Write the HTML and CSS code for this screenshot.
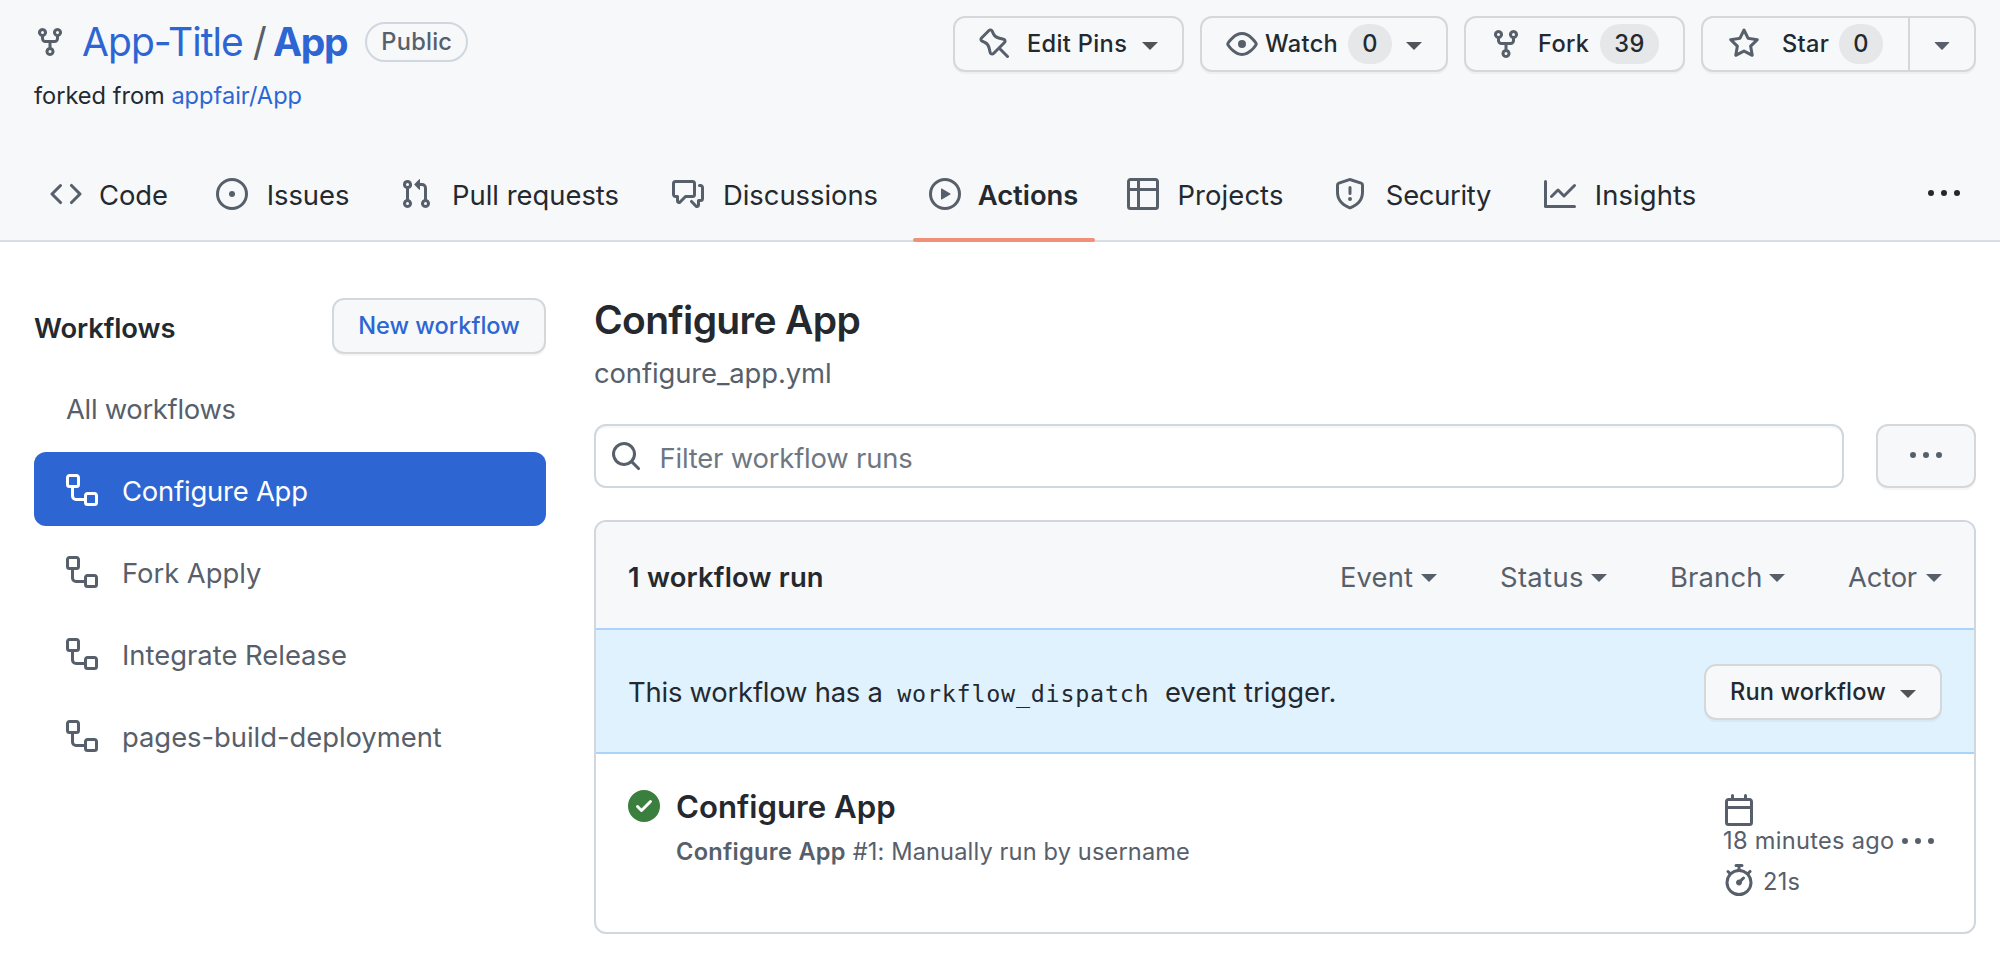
FILE: index.html
```html
<!DOCTYPE html>
<html lang="en">
<head>
<meta charset="utf-8">
<title>Configure App · Workflow runs</title>
<link rel="stylesheet" href="styles.css">
</head>
<body>
<svg class="sprite" aria-hidden="true">
  <symbol id="fork" viewBox="0 0 16 16"><path fill-rule="evenodd" d="M5 3.25a.75.75 0 11-1.5 0 .75.75 0 011.5 0zm0 2.122a2.25 2.25 0 10-1.5 0v.878A2.25 2.25 0 005.75 8.5h1.5v2.128a2.251 2.251 0 101.5 0V8.5h1.5a2.25 2.25 0 002.25-2.25v-.878a2.25 2.25 0 10-1.5 0v.878a.75.75 0 01-.75.75h-4.5A.75.75 0 015 6.25v-.878zm3.75 7.378a.75.75 0 11-1.5 0 .75.75 0 011.5 0zm3-8.75a.75.75 0 100-1.5.75.75 0 000 1.5z"/></symbol>
  <symbol id="code" viewBox="0 0 16 16"><path fill-rule="evenodd" d="M4.72 3.22a.75.75 0 011.06 1.06L2.06 8l3.72 3.72a.75.75 0 11-1.06 1.06L.47 8.53a.75.75 0 010-1.06l4.25-4.25zm6.56 0a.75.75 0 10-1.06 1.06L13.94 8l-3.72 3.72a.75.75 0 101.06 1.06l4.25-4.25a.75.75 0 000-1.06l-4.25-4.25z"/></symbol>
  <symbol id="issue" viewBox="0 0 16 16"><path d="M8 9.5a1.5 1.5 0 100-3 1.5 1.5 0 000 3z"/><path fill-rule="evenodd" d="M8 0a8 8 0 100 16A8 8 0 008 0zM1.5 8a6.5 6.5 0 1113 0 6.5 6.5 0 01-13 0z"/></symbol>
  <symbol id="pull" viewBox="0 0 16 16"><path fill-rule="evenodd" d="M7.177 3.073L9.573.677A.25.25 0 0110 .854v4.792a.25.25 0 01-.427.177L7.177 3.427a.25.25 0 010-.354zM3.75 2.5a.75.75 0 100 1.5.75.75 0 000-1.5zm-2.25.75a2.25 2.25 0 113 2.122v5.256a2.251 2.251 0 11-1.5 0V5.372A2.25 2.25 0 011.5 3.25zM11 2.5h-1V4h1a1 1 0 011 1v5.628a2.251 2.251 0 101.5 0V5A2.5 2.5 0 0011 2.5zm1 10.25a.75.75 0 111.5 0 .75.75 0 01-1.5 0zM3.75 12a.75.75 0 100 1.5.75.75 0 000-1.5z"/></symbol>
  <symbol id="discussion" viewBox="0 0 16 16"><path fill-rule="evenodd" d="M1.5 2.75a.25.25 0 01.25-.25h8.5a.25.25 0 01.25.25v5.5a.25.25 0 01-.25.25h-3.5a.75.75 0 00-.53.22L3.5 11.44V9.25a.75.75 0 00-.75-.75h-1a.25.25 0 01-.25-.25v-5.5zM1.75 1A1.75 1.75 0 000 2.75v5.5C0 9.216.784 10 1.75 10H2v1.543a1.457 1.457 0 002.487 1.03L7.061 10h3.189A1.75 1.75 0 0012 8.25v-5.5A1.75 1.75 0 0010.25 1h-8.5zM14.5 4.75a.25.25 0 00-.25-.25h-.5a.75.75 0 110-1.5h.5c.966 0 1.75.784 1.75 1.75v5.5A1.75 1.75 0 0114.25 12H14v1.543a1.457 1.457 0 01-2.487 1.03L9.22 12.28a.75.75 0 111.06-1.06l2.22 2.22v-2.19a.75.75 0 01.75-.75h1a.25.25 0 00.25-.25v-5.5z"/></symbol>
  <symbol id="play" viewBox="0 0 16 16"><path fill-rule="evenodd" d="M1.5 8a6.5 6.5 0 1113 0 6.5 6.5 0 01-13 0zM8 0a8 8 0 100 16A8 8 0 008 0zM6.379 5.227A.25.25 0 006 5.442v5.117a.25.25 0 00.379.214l4.264-2.559a.25.25 0 000-.428L6.379 5.227z"/></symbol>
  <symbol id="table" viewBox="0 0 16 16"><path fill-rule="evenodd" d="M0 1.75C0 .784.784 0 1.75 0h12.5C15.216 0 16 .784 16 1.75v12.5A1.75 1.75 0 0114.25 16H1.75A1.75 1.75 0 010 14.25V1.75zM1.5 6.5v7.75c0 .138.112.25.25.25H5v-8H1.5zM5 5H1.5V1.75a.25.25 0 01.25-.25H5V5zm1.5 1.5v8h7.75a.25.25 0 00.25-.25V6.5h-8zM14.5 5h-8V1.5h7.75a.25.25 0 01.25.25V5z"/></symbol>
  <symbol id="shield" viewBox="0 0 16 16"><path fill-rule="evenodd" d="M7.467.133a1.75 1.75 0 011.066 0l5.25 1.68A1.75 1.75 0 0115 3.48V7c0 1.566-.32 3.182-1.303 4.682-.983 1.498-2.585 2.813-5.032 3.855a1.7 1.7 0 01-1.33 0c-2.447-1.042-4.049-2.357-5.032-3.855C1.32 10.182 1 8.566 1 7V3.48a1.75 1.75 0 011.217-1.667l5.25-1.68zm.61 1.429a.25.25 0 00-.153 0l-5.25 1.68a.25.25 0 00-.174.238V7c0 1.358.275 2.666 1.057 3.86.784 1.194 2.121 2.34 4.366 3.297a.2.2 0 00.154 0c2.245-.956 3.582-2.104 4.366-3.298C13.225 9.666 13.5 8.36 13.5 7V3.48a.25.25 0 00-.174-.237l-5.25-1.68zM9 10.5a1 1 0 11-2 0 1 1 0 012 0zm-.25-5.75a.75.75 0 10-1.5 0v3a.75.75 0 001.5 0v-3z"/></symbol>
  <symbol id="graph" viewBox="0 0 16 16"><path fill-rule="evenodd" d="M1.5 1.75a.75.75 0 00-1.5 0v12.5c0 .414.336.75.75.75h14.5a.75.75 0 000-1.5H1.5V1.75zm14.28 2.53a.75.75 0 00-1.06-1.06L10 7.94 7.53 5.47a.75.75 0 00-1.06 0L3.22 8.72a.75.75 0 001.06 1.06L7 7.06l2.47 2.47a.75.75 0 001.06 0l5.25-5.25z"/></symbol>
  <symbol id="kebab" viewBox="0 0 16 16"><path d="M8 9a1.5 1.5 0 100-3 1.5 1.5 0 000 3zM1.5 9a1.5 1.5 0 100-3 1.5 1.5 0 000 3zm13 0a1.5 1.5 0 100-3 1.5 1.5 0 000 3z"/></symbol>
  <symbol id="pin" viewBox="0 0 16 16"><path fill-rule="evenodd" d="M4.456.734a1.75 1.75 0 012.826.504l.613 1.327a3.081 3.081 0 002.084 1.707l2.454.584c1.332.317 1.8 1.972.832 2.94L11.06 10l3.72 3.72a.75.75 0 11-1.061 1.06L10 11.06l-2.204 2.205c-.968.968-2.623.5-2.94-.832l-.584-2.454a3.081 3.081 0 00-1.707-2.084l-1.327-.613a1.75 1.75 0 01-.504-2.826L4.456.734zM5.92 1.866a.25.25 0 00-.404-.072L1.794 5.516a.25.25 0 00.072.404l1.328.613A4.582 4.582 0 015.73 9.63l.584 2.454a.25.25 0 00.42.12l5.47-5.47a.25.25 0 00-.12-.42L9.63 5.73a4.581 4.581 0 01-3.098-2.537L5.92 1.866z"/></symbol>
  <symbol id="eye" viewBox="0 0 16 16"><path fill-rule="evenodd" d="M1.679 7.932c.412-.621 1.242-1.75 2.366-2.717C5.175 4.242 6.527 3.5 8 3.5c1.473 0 2.824.742 3.955 1.715 1.124.967 1.954 2.096 2.366 2.717a.119.119 0 010 .136c-.412.621-1.242 1.75-2.366 2.717C10.825 11.758 9.473 12.5 8 12.5c-1.473 0-2.824-.742-3.955-1.715C2.92 9.818 2.09 8.69 1.679 8.068a.119.119 0 010-.136zM8 2c-1.981 0-3.67.992-4.933 2.078C1.797 5.169.88 6.423.43 7.1a1.619 1.619 0 000 1.798c.45.678 1.367 1.932 2.637 3.024C4.329 13.008 6.019 14 8 14c1.981 0 3.67-.992 4.933-2.078 1.27-1.091 2.187-2.345 2.637-3.023a1.619 1.619 0 000-1.798c-.45-.678-1.367-1.932-2.637-3.023C11.671 2.992 9.981 2 8 2zm0 8a2 2 0 100-4 2 2 0 000 4z"/></symbol>
  <symbol id="star" viewBox="0 0 16 16"><path fill-rule="evenodd" d="M8 .25a.75.75 0 01.673.418l1.882 3.815 4.21.612a.75.75 0 01.416 1.279l-3.046 2.97.719 4.192a.75.75 0 01-1.088.791L8 12.347l-3.766 1.98a.75.75 0 01-1.088-.79l.72-4.194L.818 6.374a.75.75 0 01.416-1.28l4.21-.611L7.327.668A.75.75 0 018 .25zm0 2.445L6.615 5.5a.75.75 0 01-.564.41l-3.097.45 2.24 2.184a.75.75 0 01.216.664l-.528 3.084 2.769-1.456a.75.75 0 01.698 0l2.77 1.456-.53-3.084a.75.75 0 01.216-.664l2.24-2.183-3.096-.45a.75.75 0 01-.564-.41L8 2.694v.001z"/></symbol>
  <symbol id="triangle" viewBox="0 0 16 16"><path d="M4.427 7.427l3.396 3.396a.25.25 0 00.354 0l3.396-3.396A.25.25 0 0011.396 7H4.604a.25.25 0 00-.177.427z"/></symbol>
  <symbol id="workflow" viewBox="0 0 16 16"><path fill-rule="evenodd" d="M0 1.75C0 .784.784 0 1.75 0h3.5C6.216 0 7 .784 7 1.75v3.5A1.75 1.75 0 015.25 7H4v4a1 1 0 001 1h4v-1.25C9 9.784 9.784 9 10.75 9h3.5c.966 0 1.75.784 1.75 1.75v3.5A1.75 1.75 0 0114.25 16h-3.5A1.75 1.75 0 019 14.25v-.75H5A2.5 2.5 0 012.5 11V7h-.75A1.75 1.75 0 010 5.25v-3.5zm1.75-.25a.25.25 0 00-.25.25v3.5c0 .138.112.25.25.25h3.5a.25.25 0 00.25-.25v-3.5a.25.25 0 00-.25-.25h-3.5zm9 9a.25.25 0 00-.25.25v3.5c0 .138.112.25.25.25h3.5a.25.25 0 00.25-.25v-3.5a.25.25 0 00-.25-.25h-3.5z"/></symbol>
  <symbol id="search" viewBox="0 0 16 16"><path fill-rule="evenodd" d="M11.5 7a4.499 4.499 0 11-8.998 0A4.499 4.499 0 0111.5 7zm-.82 4.74a6 6 0 111.06-1.06l3.04 3.04a.75.75 0 11-1.06 1.06l-3.04-3.04z"/></symbol>
  <symbol id="check" viewBox="0 0 16 16"><path fill-rule="evenodd" d="M8 16A8 8 0 108 0a8 8 0 000 16zm3.78-9.72a.75.75 0 00-1.06-1.06L6.75 9.19 5.28 7.72a.75.75 0 00-1.06 1.06l2 2a.75.75 0 001.06 0l4.5-4.5z"/></symbol>
  <symbol id="calendar" viewBox="0 0 16 16"><path fill-rule="evenodd" d="M4.75 0a.75.75 0 01.75.75V2h5V.75a.75.75 0 011.5 0V2h1.25c.966 0 1.75.784 1.75 1.75v10.5A1.75 1.75 0 0113.25 16H2.75A1.75 1.75 0 011 14.25V3.75C1 2.784 1.784 2 2.75 2H4V.75A.75.75 0 014.75 0zM2.5 7.5v6.75c0 .138.112.25.25.25h10.5a.25.25 0 00.25-.25V7.5h-11zm10.75-4H2.75a.25.25 0 00-.25.25V6h11V3.75a.25.25 0 00-.25-.25z"/></symbol>
  <symbol id="stopwatch" viewBox="0 0 16 16"><path fill-rule="evenodd" d="M5.75.75A.75.75 0 016.5 0h3a.75.75 0 010 1.5h-.75v1l-.001.041a6.718 6.718 0 013.464 1.435l.007-.006.75-.75a.75.75 0 111.06 1.06l-.75.75-.006.007a6.75 6.75 0 11-10.548 0L2.72 5.03l-.75-.75a.75.75 0 011.06-1.06l.75.75.007.006A6.718 6.718 0 017.25 2.541a.756.756 0 010-.041v-1H6.5a.75.75 0 01-.75-.75zM8 14.5A5.25 5.25 0 108 4a5.25 5.25 0 000 10.5zm.389-6.7l1.33-1.33a.75.75 0 111.061 1.06L9.45 8.861A1.502 1.502 0 018 10.75a1.5 1.5 0 11.389-2.95z"/></symbol>
</svg>

<header class="repo-header">
  <div class="repo-top">
    <div class="repo-info">
      <div class="repo-title">
        <svg class="icon"><use href="#fork"/></svg>
        <a class="owner">App-Title</a><span class="slash">/</span><a class="name">App</a>
        <span class="badge">Public</span>
      </div>
      <p class="forked">forked from <a>appfair/App</a></p>
    </div>
    <div class="repo-actions">
      <button class="btn btn-pins"><svg class="icon"><use href="#pin"/></svg><span class="label">Edit Pins</span><i class="caret"></i></button>
      <button class="btn btn-watch"><svg class="icon"><use href="#eye"/></svg><span class="label">Watch</span><span class="counter">0</span><i class="caret"></i></button>
      <button class="btn btn-fork"><svg class="icon"><use href="#fork"/></svg><span class="label">Fork</span><span class="counter">39</span></button>
      <div class="btn-group">
        <button class="btn btn-star"><svg class="icon"><use href="#star"/></svg><span class="label">Star</span><span class="counter">0</span></button>
        <button class="btn btn-more"><svg class="icon"><use href="#triangle"/></svg></button>
      </div>
    </div>
  </div>
  <nav class="tabs">
    <a class="tab tab-code"><svg class="icon"><use href="#code"/></svg><span>Code</span></a>
    <a class="tab tab-issues"><svg class="icon"><use href="#issue"/></svg><span>Issues</span></a>
    <a class="tab tab-pulls"><svg class="icon"><use href="#pull"/></svg><span>Pull requests</span></a>
    <a class="tab tab-discussions"><svg class="icon"><use href="#discussion"/></svg><span>Discussions</span></a>
    <a class="tab tab-actions selected"><svg class="icon"><use href="#play"/></svg><span>Actions</span></a>
    <a class="tab tab-projects"><svg class="icon"><use href="#table"/></svg><span>Projects</span></a>
    <a class="tab tab-security"><svg class="icon"><use href="#shield"/></svg><span>Security</span></a>
    <a class="tab tab-insights"><svg class="icon"><use href="#graph"/></svg><span>Insights</span></a>
    <svg class="icon tabs-more"><use href="#kebab"/></svg>
  </nav>
</header>

<div class="layout">
  <aside class="sidebar">
    <div class="sidebar-head">
      <h2>Workflows</h2>
      <button class="btn btn-new">New workflow</button>
    </div>
    <ul class="menu">
      <li class="all"><span>All workflows</span></li>
      <li class="current"><svg class="icon"><use href="#workflow"/></svg><span>Configure App</span></li>
      <li><svg class="icon"><use href="#workflow"/></svg><span>Fork Apply</span></li>
      <li class="wide"><svg class="icon"><use href="#workflow"/></svg><span>Integrate Release</span></li>
      <li><svg class="icon"><use href="#workflow"/></svg><span>pages-build-deployment</span></li>
    </ul>
  </aside>

  <main class="content">
    <h1>Configure App</h1>
    <p class="file">configure_app.yml</p>
    <div class="filter">
      <div class="field"><svg class="icon"><use href="#search"/></svg><span>Filter workflow runs</span></div>
      <button class="btn btn-kebab"><svg class="icon"><use href="#kebab"/></svg></button>
    </div>
    <section class="runs">
      <div class="runs-head">
        <strong>1 workflow run</strong>
        <div class="filters">
          <span class="event">Event<i class="caret"></i></span>
          <span class="status">Status<i class="caret"></i></span>
          <span class="branch">Branch<i class="caret"></i></span>
          <span class="actor">Actor<i class="caret"></i></span>
        </div>
      </div>
      <div class="banner">
        <p>This workflow has a <code>workflow_dispatch</code> <span class="trigger">event trigger.</span></p>
        <button class="btn btn-run"><span class="label">Run workflow</span><i class="caret"></i></button>
      </div>
      <div class="run">
        <svg class="icon ok"><use href="#check"/></svg>
        <div class="run-info">
          <h3>Configure App</h3>
          <p><b>Configure App</b> #1: Manually run by username</p>
        </div>
        <div class="run-meta">
          <svg class="icon"><use href="#calendar"/></svg>
          <span class="ago">18 minutes ago</span>
          <div class="duration"><svg class="icon"><use href="#stopwatch"/></svg><span>21s</span></div>
        </div>
        <svg class="icon run-more"><use href="#kebab"/></svg>
      </div>
    </section>
  </main>
</div>
</body>
</html>
```
FILE: styles.css
```css
* { box-sizing: border-box; }

body {
  margin: 0;
  background: #fff;
  color: #24292f;
  font: 400 27.4px/40px Inter, "Liberation Sans", sans-serif;
  letter-spacing: -0.03px;
  white-space: nowrap;
}

h1, h2, h3, p, ul { margin: 0; padding: 0; }
a { color: #2d66d3; }
.sprite { display: none; }
.icon { width: 32px; height: 32px; flex: none; display: block; fill: #57606a; }

.caret {
  flex: none;
  border: 8px solid transparent;
  border-top-color: #505459;
  border-bottom: 0;
}

/* Buttons */
.btn {
  display: flex;
  align-items: center;
  height: 56px;
  margin: 0;
  padding: 0 24px;
  border: 2px solid #d5d8da;
  border-radius: 12px;
  background: #f6f8fa;
  box-shadow: 0 2px 0 rgba(27, 31, 36, 0.04);
  color: #24292f;
  font: 500 23.6px/40px Inter, "Liberation Sans", sans-serif;
  letter-spacing: 0.35px;
}
.btn .label { text-align: left; }
.btn .caret { position: relative; top: 1.5px; }

.counter {
  min-width: 44px;
  height: 40px;
  border-radius: 20px;
  background: #e6e7e9;
  text-align: center;
}

/* Repository header */
.repo-header {
  display: flex;
  flex-direction: column;
  justify-content: space-between;
  height: 242px;
  padding-top: 16px;
  border-bottom: 2px solid #d8dee4;
  background: #f6f8fa;
}
.repo-top { display: flex; justify-content: space-between; padding: 0 24px 0 34px; }
.repo-title { display: flex; align-items: center; height: 52px; font-size: 39px; line-height: 52px; }
.owner { margin-left: 16px; letter-spacing: -0.94px; }
.slash { margin: 0 6px 0 10px; color: #57606a; }
.name { font-weight: 650; letter-spacing: -1.3px; }
.badge {
  width: 103px;
  height: 40px;
  margin-left: 18px;
  border: 2px solid #d0d7de;
  border-radius: 20px;
  color: #57606a;
  font-size: 23.6px;
  font-weight: 500;
  line-height: 35px;
  letter-spacing: 0.25px;
  text-align: center;
}
.forked { margin-top: 10px; font-size: 23.6px; line-height: 36px; letter-spacing: 0; }

.repo-actions { display: flex; gap: 16px; height: 56px; }
.btn-pins { width: 231px; }
.btn-pins .label { width: 100px; margin: 0 15px 0 16px; }
.btn-watch { width: 248px; }
.btn-watch .label { width: 75px; margin: 0 8px 0 7px; }
.btn-watch .caret { margin-left: 14px; }
.btn-fork { width: 221px; }
.btn-fork .label { width: 51px; margin: 0 11px 0 16px; }
.btn-fork .counter { width: 59px; }
.btn-group { display: flex; }
.btn-star { width: 209px; padding-left: 25px; border-radius: 12px 0 0 12px; }
.btn-star .label { width: 47px; margin: 0 10px 0 23px; }
.btn-star .icon { margin-right: -1px; }
.btn-more { width: 66px; padding: 0 16px; border-left: 0; border-radius: 0 12px 12px 0; }

/* Tabs */
.tabs { display: flex; gap: 16px; height: 96px; margin-bottom: -2px; padding: 0 40px 0 34px; }
.tab {
  position: relative;
  display: flex;
  align-items: center;
  gap: 16px;
  padding: 0 16px;
  color: #24292f;
}
.tab span { padding-top: 2px; text-align: center; }
.tab-code span { width: 71px; margin-right: -1px; }
.tab-issues span { width: 88px; }
.tab-pulls span { width: 175px; margin-right: 1px; letter-spacing: 0; }
.tab-discussions span { width: 161px; }
.tab-actions span { width: 102px; }
.tab-projects span { width: 111px; letter-spacing: 0.1px; }
.tab-security span { width: 113px; margin-right: 1px; letter-spacing: -0.3px; }
.tab-insights span { width: 107px; letter-spacing: 0.1px; }
.tab.selected { font-weight: 600; }
.tab.selected::after {
  content: "";
  position: absolute;
  right: 0;
  bottom: 0;
  left: 0;
  height: 4px;
  border-radius: 2px;
  background: #f09078;
}
.tabs-more { align-self: center; margin-left: auto; fill: #24292f; }

/* Page body */
.layout { display: grid; grid-template-columns: 512px 1382px; gap: 48px; padding-left: 34px; }

.sidebar { padding-top: 56px; }
.sidebar-head { display: flex; align-items: center; justify-content: space-between; height: 56px; }
.sidebar-head h2 { padding-top: 3px; font-size: 27.4px; font-weight: 600; letter-spacing: -0.1px; }
.btn-new { width: 214px; justify-content: center; color: #2d66d3; letter-spacing: 0; }
.menu { display: grid; gap: 8px; margin-top: 16px; list-style: none; }
.menu li {
  display: flex;
  align-items: center;
  gap: 24px;
  height: 74px;
  padding: 2px 32px 0;
  border-radius: 12px;
  color: #57606a;
}
.menu span { padding-top: 2px; }
.menu .all { letter-spacing: -0.3px; }
.menu .wide { letter-spacing: 0; }
.menu .current { background: #2d66d3; color: #fff; letter-spacing: -0.2px; }
.menu .current .icon { fill: #fff; }

.content { padding-top: 52px; }
h1 { font-size: 39px; font-weight: 600; line-height: 52px; letter-spacing: -0.66px; }
.file { margin-top: 7px; color: #57606a; letter-spacing: -0.1px; }

.filter { display: flex; gap: 32px; margin-top: 31px; }
.field {
  display: flex;
  flex: 1;
  align-items: center;
  gap: 17.5px;
  height: 64px;
  padding: 0 14px;
  border: 2px solid #d0d7de;
  border-radius: 12px;
  box-shadow: inset 0 2px 0 rgba(208, 215, 222, 0.2);
  color: #6e7781;
  letter-spacing: -0.18px;
}
.field span { padding-top: 3px; }
.btn-kebab { width: 100px; height: 64px; justify-content: center; }

/* Run list */
.runs { height: 414px; margin-top: 32px; border: 2px solid #d0d7de; border-radius: 12px; overflow: hidden; }
.runs-head {
  display: flex;
  align-items: center;
  justify-content: space-between;
  height: 106px;
  padding: 3px 32px 0;
  background: #f6f8fa;
}
.runs-head strong { font-weight: 600; letter-spacing: 0.2px; }
.filters { display: flex; gap: 63px; color: #57606a; }
.filters span { display: flex; align-items: center; justify-content: space-between; }
.filters .caret { position: relative; top: 1.5px; border-top-color: #57606a; }
.event { width: 97px; letter-spacing: 0.15px; }
.status { width: 107px; letter-spacing: 0.35px; }
.branch { width: 115px; letter-spacing: 0.15px; }
.actor { width: 94px; letter-spacing: -0.2px; }

.banner {
  display: flex;
  align-items: center;
  justify-content: space-between;
  height: 126px;
  padding: 2px 32px 0;
  border: solid #abd4fb;
  border-width: 2px 0;
  background: #e0f2fe;
}
.banner p { padding-top: 2px; letter-spacing: -0.21px; }
.banner code {
  margin: 0 8px 0 7px;
  font: 23.4px/40px "DejaVu Sans Mono", monospace;
  letter-spacing: 0.75px;
}
.trigger { letter-spacing: 0; }
.btn-run { width: 238px; letter-spacing: 0.12px; justify-content: space-between; }

.run { display: flex; padding: 36px 8px 0 32px; }
.run .ok { fill: #3b7f3f; }
.run-info { flex: 1; margin: -1px 0 0 16px; }
.run-info h3 { font-size: 31.2px; font-weight: 600; line-height: 36px; letter-spacing: 0; }
.run-info p { margin-top: 9px; color: #57606a; font-size: 23.6px; line-height: 36px; letter-spacing: 0.14px; }
.run-info b { font-weight: 600; letter-spacing: 0.28px; }
.run-meta { width: 179px; padding-top: 4px; color: #57606a; font-size: 23.6px; line-height: 30px; letter-spacing: 0.3px; }
.ago { display: block; height: 30px; }
.duration { display: flex; gap: 8px; height: 32px; margin-top: 8px; }
.duration span { line-height: 35px; }
.run-more { margin: 36px 32px 0 0; }
```
